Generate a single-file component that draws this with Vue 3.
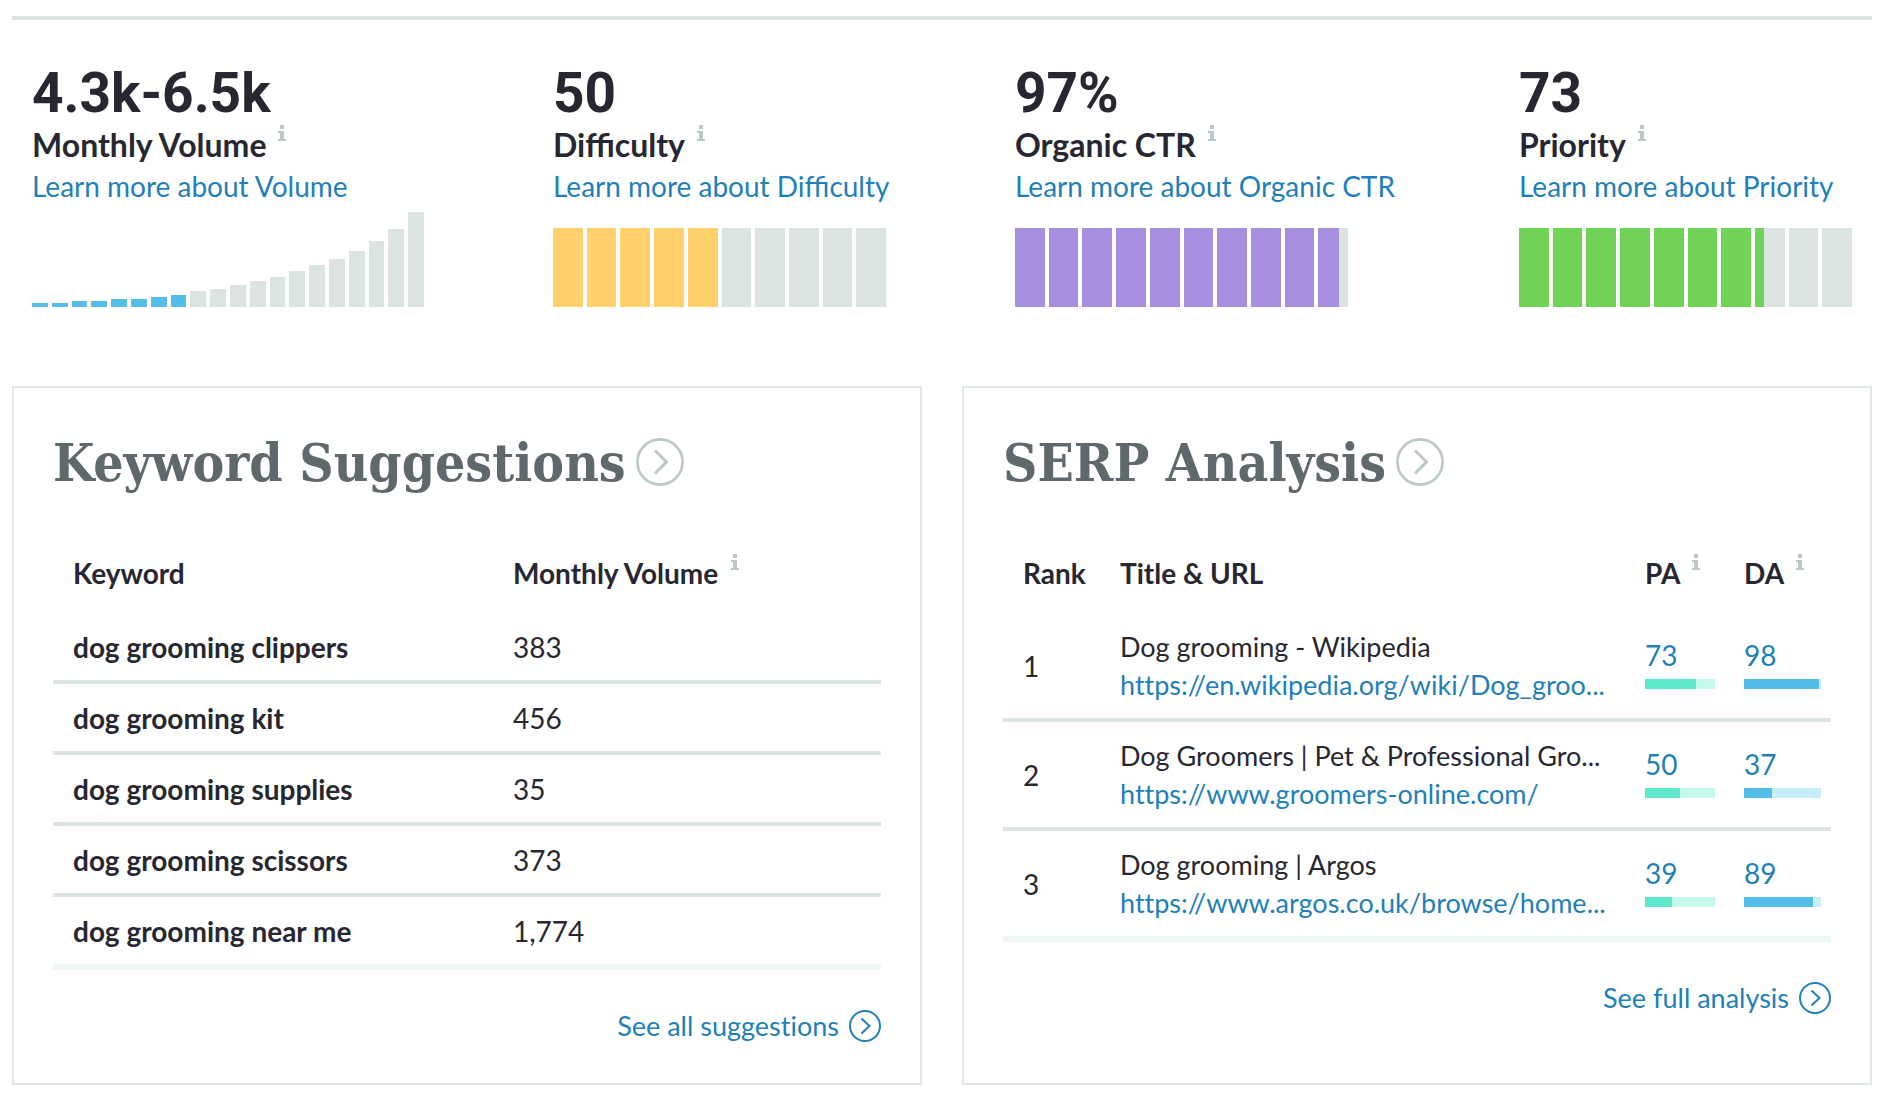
<script setup>
const volumeBars = [4, 4, 6, 6, 8, 8, 10, 12, 16, 18, 22, 26, 30, 36, 42, 48, 56, 66, 78, 95]
const volumeFilled = 8

const metrics = [
  { value: '4.3k-6.5k', label: 'Monthly Volume', link: 'Learn more about Volume', kind: 'volume' },
  { value: '50', label: 'Difficulty', link: 'Learn more about Difficulty', kind: 'difficulty', score: 50 },
  { value: '97%', label: 'Organic CTR', link: 'Learn more about Organic CTR', kind: 'ctr', score: 97 },
  { value: '73', label: 'Priority', link: 'Learn more about Priority', kind: 'priority', score: 73 },
]

// Share of one tenth-segment that is filled, in percent
const segmentFill = (score, n) => Math.max(0, Math.min(100, (score - (n - 1) * 10) * 10))

const suggestions = [
  { keyword: 'dog grooming clippers', volume: '383' },
  { keyword: 'dog grooming kit', volume: '456' },
  { keyword: 'dog grooming supplies', volume: '35' },
  { keyword: 'dog grooming scissors', volume: '373' },
  { keyword: 'dog grooming near me', volume: '1,774' },
]

const results = [
  { title: 'Dog grooming - Wikipedia', url: 'https://en.wikipedia.org/wiki/Dog_groo...', pa: 73, da: 98 },
  { title: 'Dog Groomers | Pet & Professional Gro...', url: 'https://www.groomers-online.com/', pa: 50, da: 37 },
  { title: 'Dog grooming | Argos', url: 'https://www.argos.co.uk/browse/home...', pa: 39, da: 89 },
]
</script>

<template>
  <main class="page">
    <section class="metrics">
      <article v-for="m in metrics" :key="m.kind" class="metric" :class="m.kind">
        <div class="value">{{ m.value }}</div>
        <h3 class="label">
          {{ m.label }}
          <button type="button" class="info" :aria-label="'About ' + m.label">
            <svg viewBox="0 0 8 16" width="8" height="16"><path d="M2 0h4v4H2zM0 6h6v8h2v2H0v-2h2V8H0z" /></svg>
          </button>
        </h3>
        <a href="#" class="more">{{ m.link }}</a>
        <div v-if="m.kind === 'volume'" class="volume-chart">
          <span v-for="(h, i) in volumeBars" :key="i" :class="{ on: i < volumeFilled }" :style="{ height: h + 'px' }"></span>
        </div>
        <div v-else class="segments">
          <span v-for="n in 10" :key="n"><i :style="{ width: segmentFill(m.score, n) + '%' }"></i></span>
        </div>
      </article>
    </section>

    <div class="cards">
      <section class="card">
        <h2>
          Keyword Suggestions
          <a href="#" aria-label="Open Keyword Suggestions">
            <svg viewBox="0 0 48 48" width="48" height="48"><circle cx="24" cy="24" r="22.6" /><path d="M19 12.5l11.5 11.5L19 35.5" /></svg>
          </a>
        </h2>
        <table class="suggestions">
          <colgroup><col class="c-keyword" /><col /></colgroup>
          <thead>
            <tr>
              <th scope="col">Keyword</th>
              <th scope="col">
                Monthly Volume
                <button type="button" class="info" aria-label="About Monthly Volume">
                  <svg viewBox="0 0 8 16" width="8" height="16"><path d="M2 0h4v4H2zM0 6h6v8h2v2H0v-2h2V8H0z" /></svg>
                </button>
              </th>
            </tr>
          </thead>
          <tbody>
            <tr v-for="s in suggestions" :key="s.keyword">
              <th scope="row">{{ s.keyword }}</th>
              <td>{{ s.volume }}</td>
            </tr>
          </tbody>
        </table>
        <a href="#" class="all">
          See all suggestions
          <svg viewBox="0 0 32 32" width="32" height="32"><circle cx="16" cy="16" r="15" /><path d="M12.5 8.5l8 7.5-8 7.5" /></svg>
        </a>
      </section>

      <section class="card">
        <h2>
          SERP Analysis
          <a href="#" aria-label="Open SERP Analysis">
            <svg viewBox="0 0 48 48" width="48" height="48"><circle cx="24" cy="24" r="22.6" /><path d="M19 12.5l11.5 11.5L19 35.5" /></svg>
          </a>
        </h2>
        <table class="serp">
          <colgroup><col class="c-rank" /><col /><col class="c-pa" /><col class="c-da" /></colgroup>
          <thead>
            <tr>
              <th scope="col">Rank</th>
              <th scope="col">Title &amp; URL</th>
              <th v-for="k in ['PA', 'DA']" :key="k" scope="col">
                {{ k }}
                <button type="button" class="info" :aria-label="'About ' + k">
                  <svg viewBox="0 0 8 16" width="8" height="16"><path d="M2 0h4v4H2zM0 6h6v8h2v2H0v-2h2V8H0z" /></svg>
                </button>
              </th>
            </tr>
          </thead>
          <tbody>
            <tr v-for="(r, i) in results" :key="r.url">
              <td class="rank">{{ i + 1 }}</td>
              <td class="result">
                <div>{{ r.title }}</div>
                <a href="#">{{ r.url }}</a>
              </td>
              <td class="score pa">
                <a href="#">{{ r.pa }}</a>
                <div class="meter"><i :style="{ width: r.pa + '%' }"></i></div>
              </td>
              <td class="score da">
                <a href="#">{{ r.da }}</a>
                <div class="meter"><i :style="{ width: r.da + '%' }"></i></div>
              </td>
            </tr>
          </tbody>
        </table>
        <a href="#" class="all">
          See full analysis
          <svg viewBox="0 0 32 32" width="32" height="32"><circle cx="16" cy="16" r="15" /><path d="M12.5 8.5l8 7.5-8 7.5" /></svg>
        </a>
      </section>
    </div>
  </main>
</template>

<style>
body {
  margin: 0;
  background: #fff;
}
</style>

<style scoped>
.page {
  padding: 16px 14px 16px 12px;
  font-family: Lato, sans-serif;
  font-size: 28px;
  line-height: 38px;
  color: #272732;
}
a {
  color: #1f7fb9;
  text-decoration: none;
}
.metrics {
  display: flex;
  justify-content: space-between;
  border-top: 4px solid #dbe4e3;
  padding: 42px 20px 79px;
}
.metric {
  display: flex;
  flex-direction: column;
  width: 333px;
  white-space: nowrap;
}
.metric.volume {
  width: 392px;
}
.metric.ctr {
  width: 375px;
}
.value {
  font: 700 55px/63px Roboto, sans-serif;
}
.label {
  display: flex;
  align-items: flex-start;
  gap: 6px;
  margin: 0;
  font-size: 32px;
  line-height: 40px;
  font-weight: 700;
}
.info {
  border: 0;
  padding: 0;
  margin-left: 6px;
  background: none;
  line-height: 0;
  vertical-align: 14px;
  cursor: pointer;
}
.info svg {
  display: block;
  fill: #bcc8c7;
}
.more {
  line-height: 42px;
}
.volume-chart,
.segments {
  display: flex;
  align-items: flex-end;
  gap: 4px;
  height: 79px;
  margin-top: 21px;
}
.volume-chart {
  height: 95px;
  margin-top: 5px;
}
.volume-chart span {
  flex: 1;
  background: #dbe4e3;
}
.volume-chart .on {
  background: #54bdea;
}
.segments {
  width: 333px;
}
.segments span {
  flex: 1;
  height: 100%;
  background: #dbe4e3;
}
.segments i,
.meter i {
  display: block;
  height: 100%;
}
.difficulty i {
  background: #ffd06b;
}
.ctr i {
  background: #a68fdf;
}
.priority i {
  background: #70d256;
}
.cards {
  display: grid;
  grid-template-columns: 1fr 1fr;
  gap: 40px;
  font-variant-ligatures: none;
}
.card {
  display: flex;
  flex-direction: column;
  border: 2px solid #dfe8e7;
  padding: 40px 39px 38px;
}
h2 {
  display: flex;
  align-items: center;
  gap: 10px;
  margin: 0;
  font: 700 53px/68px "Roboto Slab", "DejaVu Serif Condensed", "DejaVu Serif", serif;
  color: #5f696b;
}
h2 a,
h2 svg {
  display: block;
}
svg circle,
svg circle + path {
  fill: none;
  stroke: currentColor;
  stroke-width: 2;
}
h2 a {
  color: #bcc8c7;
}
h2 circle {
  stroke-width: 2.6;
}
h2 circle + path {
  stroke-width: 3;
}
table {
  width: 100%;
  margin-top: 36px;
  table-layout: fixed;
  border-collapse: separate;
  border-spacing: 0;
}
th,
td {
  padding: 0 0 0 20px;
  text-align: left;
  white-space: nowrap;
  box-sizing: border-box;
}
thead th {
  height: 81px;
}
tbody th,
tbody td {
  height: 71px;
  border-bottom: 4px solid #dbe4e3;
}
tbody tr:last-child > * {
  height: 73px;
  border-bottom: 6px solid #eef6f5;
}
.c-keyword {
  width: 440px;
}
.c-rank {
  width: 97px;
}
.c-pa {
  width: 99px;
}
.c-da {
  width: 107px;
}
.serp tbody td {
  height: 109px;
}
.serp tbody tr:last-child td {
  height: 111px;
}
.result {
  font-size: 27px;
}
.result a,
.score a {
  display: block;
}
.score a {
  line-height: 24px;
}
.meter {
  height: 10px;
  margin-top: 12px;
}
.pa .meter {
  width: 70px;
  background: #c5f9eb;
}
.pa i {
  background: #5de7cb;
}
.da .meter {
  width: 77px;
  background: #c5eefa;
}
.da i {
  background: #54bdea;
}
.all {
  display: flex;
  align-items: center;
  align-self: flex-end;
  gap: 10px;
  margin-top: 37px;
  font-size: 27px;
}
</style>
